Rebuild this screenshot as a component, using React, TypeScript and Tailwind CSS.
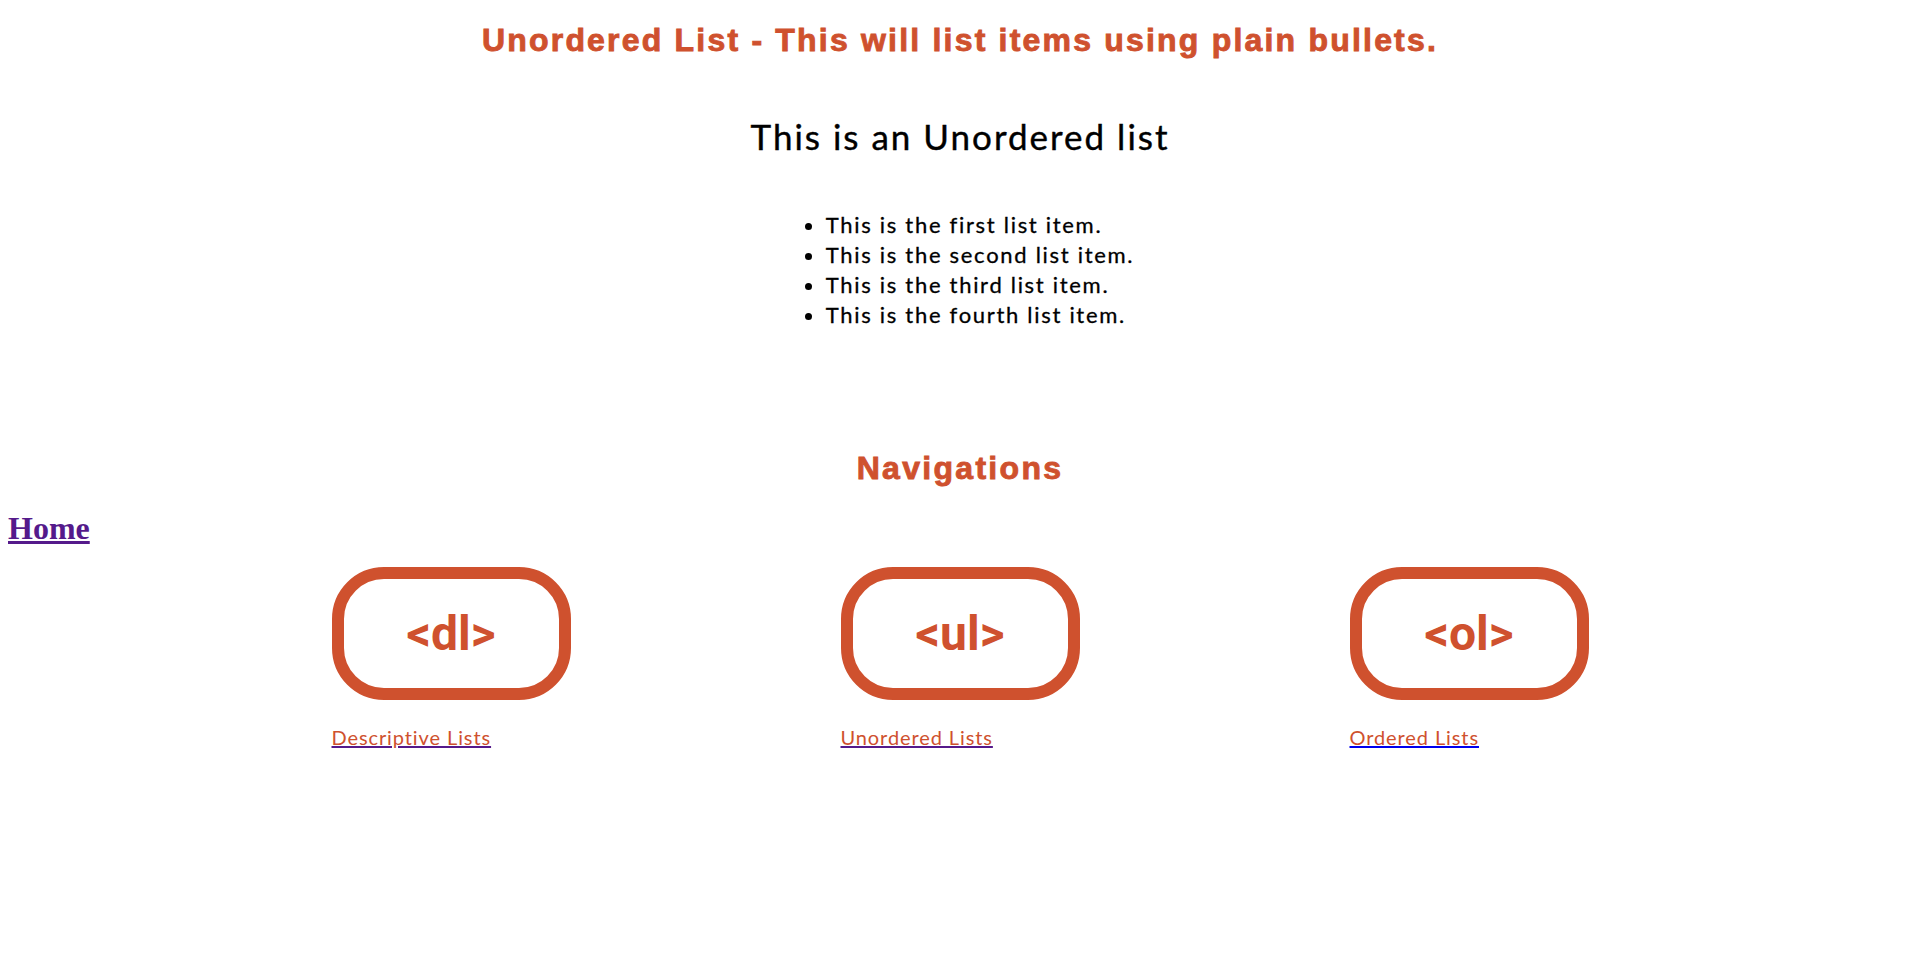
import React from "react";

const ORANGE = "text-[#cf512e]";

const items = [
  "This is the first list item.",
  "This is the second list item.",
  "This is the third list item.",
  "This is the fourth list item.",
];

const navs = [
  { tag: "<dl>", label: "Descriptive Lists", line: "decoration-[#551a8b]" },
  { tag: "<ul>", label: "Unordered Lists", line: "decoration-[#551a8b]" },
  { tag: "<ol>", label: "Ordered Lists", line: "decoration-[#0000ee]" },
];

function TagPill({ tag }: { tag: string }) {
  return (
    <div className="w-[239px] h-[133px] rounded-[52px] border-[12px] border-[#cf512e] flex items-center justify-center">
      <span className={`font-['Roboto',sans-serif] font-bold text-[48px] leading-none ${ORANGE}`}>{tag}</span>
    </div>
  );
}

export default function App() {
  return (
    <div className="min-h-screen bg-white p-2">
      <h1 className={`mt-[12px] text-center font-['Liberation_Sans',Arial,sans-serif] font-bold text-[32px] leading-[40px] tracking-[2.2px] [-webkit-text-stroke:0.9px_#cf512e] ${ORANGE}`}>
        Unordered List - This will list items using plain bullets.
      </h1>

      <h2 className="mt-[55px] text-center font-['Lato',sans-serif] text-[35px] leading-[42px] tracking-[2px] [-webkit-text-stroke:0.4px_black] text-black">
        This is an Unordered list
      </h2>

      <div className="mt-[53px] text-center">
        <ul className="inline-block text-left list-disc pl-10 font-['Lato',sans-serif] text-[22px] leading-[30px] tracking-[1.7px] [-webkit-text-stroke:0.3px_black] text-black">
          {items.map((t) => (
            <li key={t}>{t}</li>
          ))}
        </ul>
      </div>

      <h2 className={`mt-[118px] text-center font-['Liberation_Sans',Arial,sans-serif] font-bold text-[32px] leading-[40px] tracking-[2.3px] [-webkit-text-stroke:0.9px_#cf512e] ${ORANGE}`}>
        Navigations
      </h2>

      <h1 className="mt-[22px] font-['Liberation_Serif','Times_New_Roman',serif] font-bold text-[32px] leading-[37px]">
        <a href="#" className="text-[#551a8b] underline">
          Home
        </a>
      </h1>

      <div className="mt-[20px] flex justify-center gap-[270px]">
        {navs.map((n) => (
          <div key={n.tag} className="flex flex-col items-start">
            <TagPill tag={n.tag} />
            <a
              href="#"
              className={`mt-[25px] font-['Lato',sans-serif] text-[20px] leading-[24px] tracking-[0.9px] underline ${ORANGE} ${n.line}`}
            >
              {n.label}
            </a>
          </div>
        ))}
      </div>
    </div>
  );
}
